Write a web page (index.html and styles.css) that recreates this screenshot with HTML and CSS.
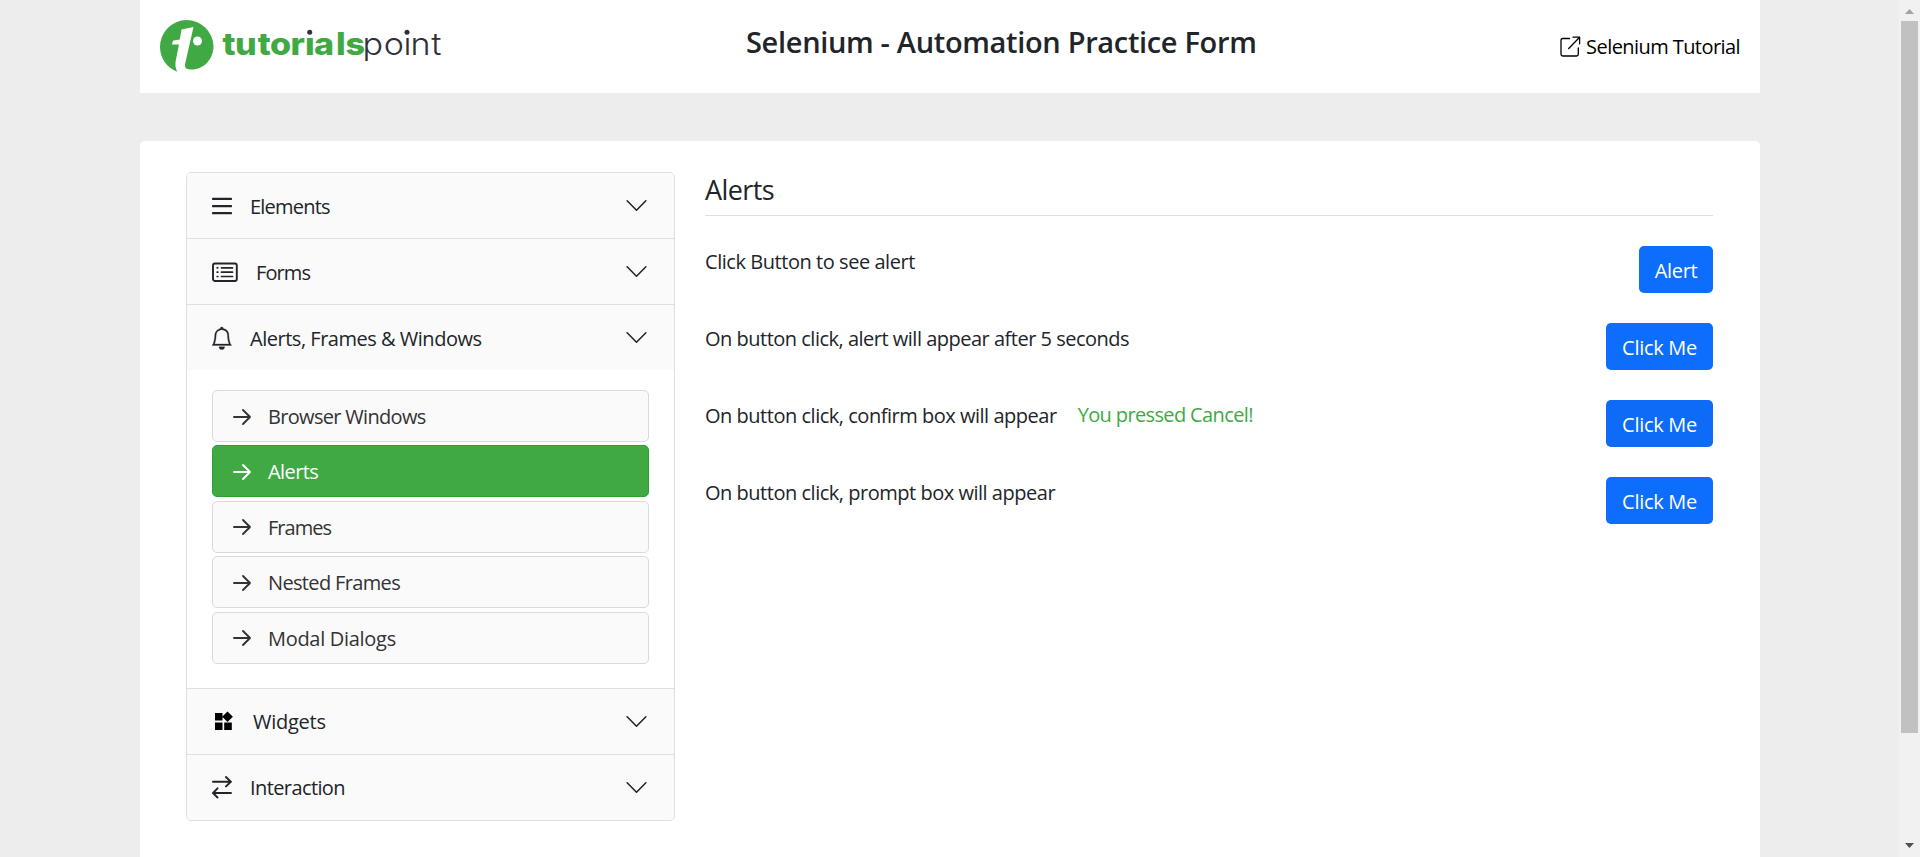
FILE: index.html
```html
<!DOCTYPE html>
<html lang="en">
<head>
<meta charset="utf-8">
<title>Selenium - Automation Practice Form</title>
<link rel="stylesheet" href="styles.css">
</head>
<body>
<div class="viewport">
  <div class="page">
    <header class="header">
      <svg class="logo" width="290" height="93" viewBox="0 0 290 93">
        <path class="brand" d="M46.5 20A27 27 0 0 1 73.500 46C73.500 60 63 69.500 52 69.500C45 69.500 44.500 67.500 45.300 63L53.500 27L41.500 29.500L39.800 39.500L33.200 40.500L31.800 44.500H39L35.500 62Q35 68 37.300 71.800C27 68 20 58 20 47A27 27 0 0 1 46.500 20Z"/>
        <circle cx="57.500" cy="41" r="4.500" fill="#fff"/>
        <text class="logo-bold" transform="translate(0 54.500) scale(1.1 1)" x="75 86.400 107 118.100 136.900 149.900 158.200 178.200 186.800">tutorials</text>
        <text class="logo-thin" transform="translate(0 54.500) scale(1.1 1)" x="202.300 221.700 239.600 245.900 264.800">point</text>
        <path fill="#fff" d="M164.500 27h10v9.800h-10zM262.500 27h9v9.800h-9z"/>
        <circle cx="169.700" cy="32.300" r="2.500" class="dot"/>
        <circle cx="267" cy="32.300" r="2.500" class="dot"/>
      </svg>
      <h1 class="title">Selenium - Automation Practice Form</h1>
      <a class="tutorial">
        <svg width="21" height="22" viewBox="0 0 21 22" class="line thin"><path d="M9.500 2.500H2.800Q1 2.500 1 4.300V18.200Q1 20 2.800 20H16.500Q18.300 20 18.300 18.200V12M13 1.200H19.600V7.800M19.600 1.200L8.700 12.500"/></svg>
        <span>Selenium Tutorial</span>
      </a>
    </header>
    <main class="card">
      <nav class="accordion">
        <div class="row">
          <svg width="20" height="65" class="line bold"><path d="M1 25.900H19M1 33.100H19M1 40.200H19"/></svg>
          <span class="t-elements">Elements</span>
          <svg class="chevron" width="25" height="25" viewBox="0 0 16 16"><path d="M2 5L8 11L14 5"/></svg>
        </div>
        <div class="row">
          <svg width="26" height="65" class="line"><rect x="1" y="24.500" width="23.800" height="17.500" rx="2"/><path class="fine" d="M9.500 28.800H20.500M9.500 33.200H20.500M9.500 37.500H20.500M5.200 28.800H5.800M5.200 33.200H5.800M5.200 37.500H5.800"/></svg>
          <span class="t-forms">Forms</span>
          <svg class="chevron" width="25" height="25" viewBox="0 0 16 16"><path d="M2 5L8 11L14 5"/></svg>
        </div>
        <div class="row">
          <svg width="20" height="65"><path class="ink" transform="translate(-1.500 22) scale(1.414)" d="M8 16a2 2 0 0 0 2-2H6a2 2 0 0 0 2 2zM8 1.918l-.797.161A4.002 4.002 0 0 0 4 6c0 .628-.134 2.197-.459 3.742-.16.767-.376 1.566-.663 2.258h10.244c-.287-.692-.502-1.490-.663-2.258C12.134 8.197 12 6.628 12 6a4.002 4.002 0 0 0-3.203-3.920L8 1.917zM14.220 12c.223.447.481.801.780 1H1c.299-.199.557-.553.780-1C2.680 10.200 3 6.880 3 6c0-2.420 1.720-4.440 4.005-4.901a1 1 0 1 1 1.990 0A5.002 5.002 0 0 1 13 6c0 .880.320 4.200 1.220 6z"/></svg>
          <span class="t-afw">Alerts, Frames &amp; Windows</span>
          <svg class="chevron" width="25" height="25" viewBox="0 0 16 16"><path d="M2 5L8 11L14 5"/></svg>
        </div>
        <ul class="sub">
          <li class="item"><svg width="19" height="18" class="line"><path d="M1 9H17M10 2L17 9L10 16"/></svg><span class="t-browser">Browser Windows</span></li>
          <li class="item active"><svg width="19" height="18" class="line"><path d="M1 9H17M10 2L17 9L10 16"/></svg><span class="t-alerts">Alerts</span></li>
          <li class="item"><svg width="19" height="18" class="line"><path d="M1 9H17M10 2L17 9L10 16"/></svg><span class="t-frames">Frames</span></li>
          <li class="item"><svg width="19" height="18" class="line"><path d="M1 9H17M10 2L17 9L10 16"/></svg><span class="t-nested">Nested Frames</span></li>
          <li class="item"><svg width="19" height="18" class="line"><path d="M1 9H17M10 2L17 9L10 16"/></svg><span class="t-modal">Modal Dialogs</span></li>
        </ul>
        <div class="row ruled">
          <svg width="24" height="65"><path d="M3 24h7.500v7.500H3zM3 33.400h7.500v7.500H3zM12.200 33.400h7.600v7.500h-7.600zM15.500 22.400l5.400 5.300-5.400 5.300-5.300-5.300z"/></svg>
          <span class="t-widgets">Widgets</span>
          <svg class="chevron" width="25" height="25" viewBox="0 0 16 16"><path d="M2 5L8 11L14 5"/></svg>
        </div>
        <div class="row">
          <svg width="20" height="65" class="line"><path d="M1 26.700H19M14 22L18.800 26.700L14 31.400M19 38H1M5.500 33.300L1 38L5.500 42.500"/></svg>
          <span class="t-inter">Interaction</span>
          <svg class="chevron" width="25" height="25" viewBox="0 0 16 16"><path d="M2 5L8 11L14 5"/></svg>
        </div>
      </nav>
      <section class="content">
        <h2 class="heading">Alerts</h2>
        <div class="field"><label class="l1">Click Button to see alert</label><button class="btn small">Alert</button></div>
        <div class="field"><label class="l2">On button click, alert will appear after 5 seconds</label><button class="btn">Click Me</button></div>
        <div class="field"><label class="l3">On button click, confirm box will appear</label><p class="message">You pressed Cancel!</p><button class="btn focused">Click Me</button></div>
        <div class="field"><label class="l4">On button click, prompt box will appear</label><button class="btn">Click Me</button></div>
      </section>
    </main>
  </div>
  <div class="scrollbar">
    <svg width="21" height="21"><path d="M10.500 9L15 14H6z" fill="#a3a3a3"/></svg>
    <div class="thumb"></div>
    <svg class="down" width="21" height="21"><path d="M6 7H15L10.500 12z" fill="#505050"/></svg>
  </div>
</div>
</body>
</html>
```
FILE: styles.css
```css
* { box-sizing: border-box; }
body { margin: 0; overflow: hidden; background: #ededed; color: #212529; font: 20px/30px "Open Sans", "Noto Sans", sans-serif; letter-spacing: -0.4px; }
h1, h2, p, ul { margin: 0; padding: 0; font-weight: 400; }
svg { display: block; flex: none; }
.viewport { display: flex; height: 857px; overflow: hidden; }
.page { flex: 1; padding: 0 139px 0 140px; }
.header { height: 93px; background: #fff; display: flex; padding-right: 20px; }
.logo { overflow: visible; }
.brand { fill: #41a944; }
.dot { fill: #303038; }
.logo-bold { font: 800 31px Inter, sans-serif; fill: #41a944; letter-spacing: 0; }
.logo-thin { font: 300 31px Inter, sans-serif; fill: #303038; letter-spacing: 0; }
.title { font-size: 29px; font-weight: 600; line-height: 40px; padding-top: 22px; margin-left: 316px; letter-spacing: -0.33px; white-space: nowrap; }
.tutorial { display: flex; gap: 5px; margin-left: auto; color: #000; padding-top: 31px; letter-spacing: -0.57px; white-space: nowrap; }
.tutorial svg { margin-top: 5px; }
.tutorial span { padding-top: 1px; }
.line { fill: none; stroke: currentColor; stroke-width: 1.900; stroke-linecap: round; stroke-linejoin: round; }
.bold { stroke-width: 2.200; }
.thin { stroke-width: 1.300; }
.fine { stroke-width: 1.700; }
.ink { fill: #212529; stroke: #212529; stroke-width: 0.200; }
.card { margin-top: 48px; height: 740px; background: #fff; border-radius: 5px; display: flex; align-items: flex-start; padding: 31px 47px 0 46px; gap: 30px; }
.accordion { width: 489px; border: 1px solid #dedfe0; border-radius: 5px; overflow: hidden; }
.row { display: flex; align-items: center; gap: 17px; height: 65px; padding: 0 25px; background: #fafafa; white-space: nowrap; }
.row + .row, .ruled { border-top: 1px solid #dedfe0; height: 66px; }
.row > span { padding-top: 3px; }
.row > .t-widgets, .row > .t-inter { padding-top: 2px; }
.t-elements { margin-left: 1px; letter-spacing: -0.78px; }
.t-forms { margin-left: 1px; letter-spacing: -0.9px; }
.t-afw { margin-left: 1px; letter-spacing: -0.48px; }
.t-browser { letter-spacing: -0.68px; }
.t-alerts { letter-spacing: -0.6px; }
.t-frames { letter-spacing: -0.95px; }
.t-nested { letter-spacing: -0.65px; }
.t-modal { letter-spacing: -0.3px; }
.t-widgets { letter-spacing: -0.25px; }
.t-inter { margin-left: 1px; letter-spacing: -0.6px; }
.chevron { margin-left: auto; fill: none; stroke: #212529; stroke-width: 1; stroke-linecap: round; stroke-linejoin: round; }
.sub { list-style: none; display: flex; flex-direction: column; gap: 3.400px; padding: 20px 25px 24.400px; }
.item { height: 52px; border: 1px solid #d9dadb; border-radius: 5px; background: #fafafa; color: #333; display: flex; align-items: center; gap: 16px; padding: 1px 20px 0; }
.item span { padding-top: 1px; }
.active { background: #41a944; border-color: #2ea031; color: #fff; }
.content { flex: 1; }
.heading { font-size: 27px; line-height: 30px; height: 44px; padding-top: 3px; border-bottom: 1px solid #dedfe0; margin-bottom: 30px; letter-spacing: -0.6px; }
.field { display: flex; height: 47px; margin-bottom: 30px; align-items: flex-start; white-space: nowrap; }
.field label { padding-top: 1px; }
.l1 { letter-spacing: -0.45px; }
.l2 { letter-spacing: -0.5px; }
.l3, .l4 { letter-spacing: -0.48px; }
.message { color: #41a944; margin-left: 21px; letter-spacing: -0.63px; }
.btn { margin-left: auto; width: 107px; height: 47px; border: 0; border-radius: 5px; background: #0d6efd; color: #fff; font: inherit; letter-spacing: -0.3px; padding: 2px 0 0; }
.small { width: 74px; }
.focused { background: #0d6bf7; }
.scrollbar { width: 21px; background: #f1f1f1; display: flex; flex-direction: column; }
.thumb { margin: 0 2px; height: 712px; background: #c1c1c1; }
.down { margin-top: auto; }
```
